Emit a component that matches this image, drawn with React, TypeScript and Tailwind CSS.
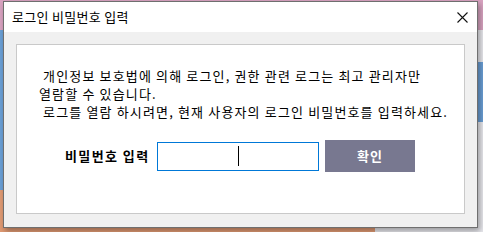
export default function App() {
  const font = { fontFamily: '"Noto Sans CJK KR", "Noto Sans", sans-serif' };
  return (
    <div className="relative w-[483px] h-[232px] overflow-hidden bg-[#e9e9ee]" style={font}>
      {/* desktop behind the dialog */}
      <div className="absolute left-0 top-0 w-[483px] h-[30px] bg-[#d9a3c1]" />
      <div className="absolute left-0 top-[30px] w-[8px] h-[160px] bg-[#6a9fd6]" />
      <div className="absolute left-0 top-[190px] w-[375px] h-[42px] bg-[#e09a73]" />
      <div className="absolute left-[470px] top-[62px] w-[13px] h-[60px] bg-[#6a9fd6]" />

      <div className="absolute left-[3px] top-[1px] w-[475px] h-[227px] flex flex-col border border-[#6f6f6f] bg-[#f0f0f0] shadow-[2px_3px_6px_rgba(0,0,0,0.35)]">
        <div className="h-[30px] shrink-0 bg-white flex items-center justify-between pl-[8px] pr-[9px]">
          <span className="text-[13px] text-black tracking-[0.3px]">로그인 비밀번호 입력</span>
          <svg width="11" height="11" viewBox="0 0 11 11" stroke="#111" strokeWidth="1.1" fill="none">
            <path d="M0.5 0.5 L10.5 10.5 M10.5 0.5 L0.5 10.5" />
          </svg>
        </div>
        <div className="flex-1 px-[12px] pt-[12px] pb-[13px]">
          <div className="h-full border border-[#c9c9c9] bg-white flex flex-col">
            <div className="pl-[22px] pt-[22px] text-[13px] leading-[18px] text-black tracking-[1.15px] whitespace-pre">
              <div>{' 개인정보 보호법에 의해 로그인, 권한 관련 로그는 최고 관리자만'}</div>
              <div>열람할 수 있습니다.</div>
              <div>{' 로그를 열람 하시려면, 현재 사용자의 로그인 비밀번호를 입력하세요.'}</div>
            </div>
            <div className="flex items-center mt-[19px] pl-[48px]">
              <span className="text-[13px] font-bold text-black w-[92px] tracking-[1.4px]">비밀번호 입력</span>
              <div className="relative w-[162px] h-[29px] border border-[#0078d7] bg-white">
                <div className="absolute left-[80px] top-[3px] w-px h-[20px] bg-black" />
              </div>
              <button className="ml-[6px] w-[90px] h-[32px] bg-[#787890] text-white text-[13px] font-bold tracking-[1px]">
                확인
              </button>
            </div>
          </div>
        </div>
      </div>
    </div>
  );
}
